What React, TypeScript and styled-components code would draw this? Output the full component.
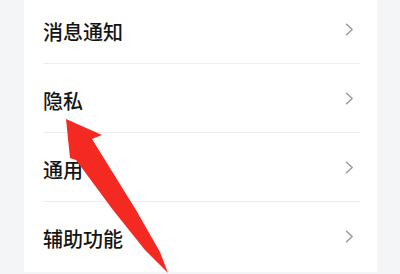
import styled, { createGlobalStyle } from "styled-components";

const GlobalStyle = createGlobalStyle`
  html, body {
    margin: 0;
    padding: 0;
    background: #f4f5f7;
    overflow: hidden;
  }
  * { box-sizing: border-box; }
`;

const items = ["消息通知", "隐私", "通用", "辅助功能"];

const Page = styled.div`
  position: relative;
  width: 400px;
  height: 274px;
  background: #f4f5f7;
  padding: 0 23px 0 24px;
  overflow: hidden;
`;

const Card = styled.div`
  background: #ffffff;
  margin-top: -5px;
  padding: 0 17px 0 19px;
  height: 277px;
`;

const Row = styled.div<{ $last?: boolean }>`
  display: flex;
  align-items: center;
  justify-content: space-between;
  height: 69px;
  border-bottom: ${(p) => (p.$last ? "none" : "1px solid #ededed")};
`;

const Label = styled.span`
  font-family: "Noto Sans CJK SC", "Noto Sans", sans-serif;
  font-size: 20px;
  font-weight: 500;
  color: #141414;
  padding-top: 4px;
`;

const Chevron = styled.svg`
  width: 9px;
  height: 13px;
  margin-right: 6px;
`;

const Arrow = styled.svg`
  position: absolute;
  left: 0;
  top: 0;
  pointer-events: none;
`;

export default function App() {
  return (
    <Page>
      <GlobalStyle />
      <Card>
        {items.map((t, i) => (
          <Row key={t} $last={i === items.length - 1}>
            <Label>{t}</Label>
            <Chevron viewBox="0 0 9 13">
              <path
                d="M1.5 1.2 L7.2 6.5 L1.5 11.8"
                fill="none"
                stroke="#9b9b9b"
                strokeWidth="1.5"
                strokeLinecap="round"
                strokeLinejoin="round"
              />
            </Chevron>
          </Row>
        ))}
      </Card>
      <Arrow width="400" height="274" viewBox="0 0 400 274">
        <polygon
          points="66,119 102,135 92,139 136,210 160,252 168,273 145,250 113,210 76,160 70,158"
          fill="#f42a22"
        />
      </Arrow>
    </Page>
  );
}
